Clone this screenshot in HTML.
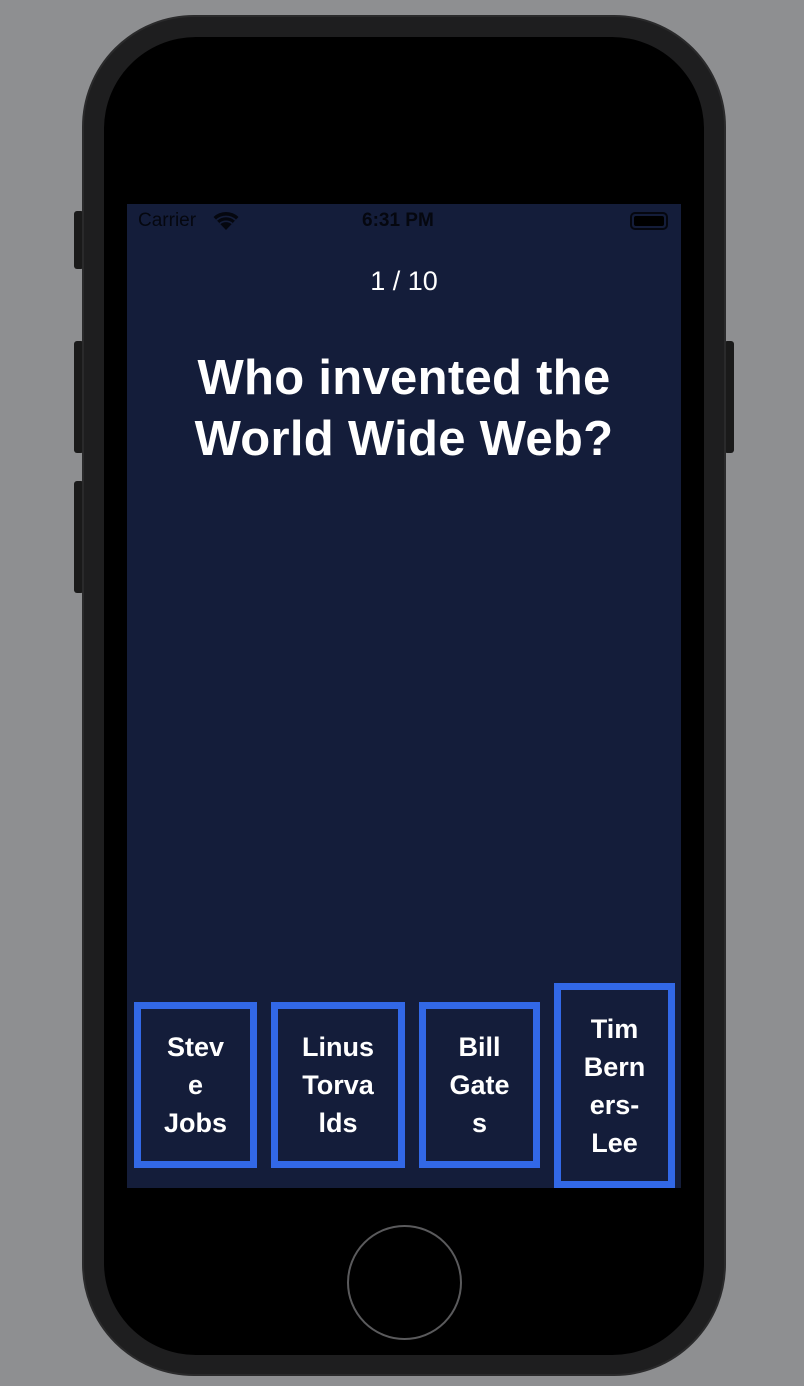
<!DOCTYPE html>
<html><head><meta charset="utf-8"><style>
*{margin:0;padding:0;box-sizing:border-box}
body{width:804px;height:1386px;background:#8e8f91;position:relative;overflow:hidden;font-family:"Liberation Sans",sans-serif}
.abs{position:absolute}
.btn{position:absolute;background:#1a1a1a;border-radius:3px}
.phone{left:82px;top:15px;width:644px;height:1361px;background:#1e1e1f;border-radius:112px;border:2px solid #2a2a2b}
.bezel{left:104px;top:37px;width:600px;height:1318px;background:#000;border-radius:92px}
.screen{left:127px;top:204px;width:554px;height:984px;background:#141d3a}
.sb{font-size:19px;color:#05070f;top:210px}
.box{position:absolute;border:7px solid #3268e6;color:#fff;font-size:27px;line-height:38px;text-align:center;display:flex;align-items:center;justify-content:center;font-weight:bold}
</style></head><body>
<div class="btn" style="left:74px;top:211px;width:10px;height:58px"></div>
<div class="btn" style="left:74px;top:341px;width:10px;height:112px"></div>
<div class="btn" style="left:74px;top:481px;width:10px;height:112px"></div>
<div class="btn" style="left:724px;top:341px;width:10px;height:112px"></div>
<div class="abs phone"></div>
<div class="abs bezel"></div>
<div class="abs screen"></div>
<div class="abs sb" style="left:138px">Carrier</div>
<svg class="abs" style="left:212px;top:210px" width="28" height="22" viewBox="0 0 28 22"><path d="M14 20 L1.5 7 A18 18 0 0 1 26.5 7 Z" fill="#05070f"/><path d="M4.5 10.2 A14 14 0 0 1 23.5 10.2 M7.8 13.6 A9.5 9.5 0 0 1 20.2 13.6" stroke="#141d3a" stroke-width="1.6" fill="none"/></svg>
<div class="abs sb" style="left:362px;font-weight:bold">6:31 PM</div>
<div class="abs" style="left:630px;top:212px;width:38px;height:18px;border:2px solid #05070f;border-radius:5px;padding:2px"><div style="background:#000;width:100%;height:100%;border-radius:2px"></div></div>
<div class="abs" style="left:127px;width:554px;top:266px;text-align:center;color:#fff;font-size:27px">1 / 10</div>
<div class="abs" style="left:127px;width:554px;top:348px;text-align:center;color:#fff;font-size:49px;font-weight:bold;line-height:61px;letter-spacing:0.3px">Who invented the<br>World Wide Web?</div>
<div class="box" style="left:134px;top:1002px;width:123px;height:166px">Stev<br>e<br>Jobs</div>
<div class="box" style="left:271px;top:1002px;width:134px;height:166px">Linus<br>Torva<br>lds</div>
<div class="box" style="left:419px;top:1002px;width:121px;height:166px">Bill<br>Gate<br>s</div>
<div class="box" style="left:554px;top:983px;width:121px;height:205px">Tim<br>Bern<br>ers-<br>Lee</div>
<div class="abs" style="left:347px;top:1225px;width:115px;height:115px;border:2px solid #5a5a5c;border-radius:50%"></div>
</body></html>
